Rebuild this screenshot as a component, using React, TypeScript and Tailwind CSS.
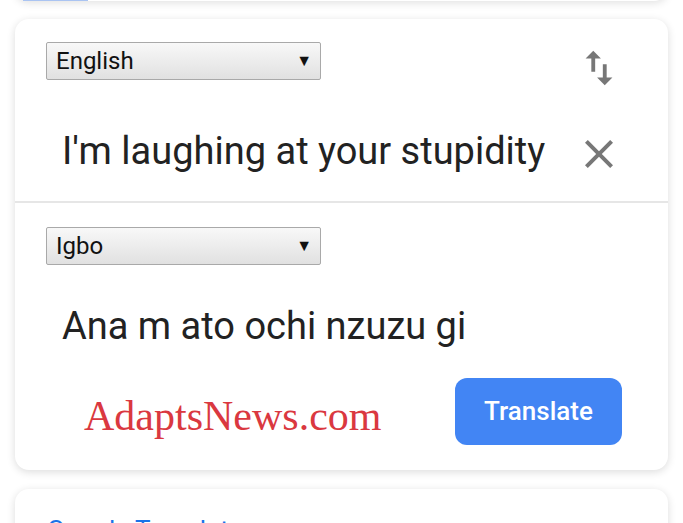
import React from "react";

const roboto = { fontFamily: "Roboto, 'Noto Sans', sans-serif" };

function LangSelect({ label }: { label: string }) {
  return (
    <div className="flex h-[38px] w-[275px] items-center justify-between rounded-[2px] border border-[#a9a9a9] bg-gradient-to-b from-[#f8f8f8] to-[#e1e1e1] pl-[9px] pr-[8px] text-[24px] text-[#111]">
      <span>{label}</span>
      <span className="text-[16px] leading-none">▼</span>
    </div>
  );
}

export default function App() {
  return (
    <div className="min-h-[523px] overflow-hidden bg-white px-[15px]" style={roboto}>
      {/* previous card, mostly scrolled away */}
      <div className="-mt-[40px] flex h-[41px] items-end rounded-[14px] bg-white shadow-[0_2px_8px_rgba(0,0,0,0.12)]">
        <div className="ml-[8px] h-[2px] w-[65px] bg-[#aac4f2]" />
      </div>

      <div className="mt-[18px] rounded-[14px] bg-white shadow-[0_2px_9px_rgba(0,0,0,0.14)]">
        <div className="h-[182px] pl-[31px] pr-[46px] pt-[23px]">
          <div className="flex items-start justify-between">
            <LangSelect label="English" />
            <svg viewBox="0 0 24 24" className="mt-[3px] h-[46px] w-[46px] fill-[#777]">
              <path d="M16 17.01V10h-2v7.01h-3L15 21l4-3.99h-3zM9 3L5 6.99h3V14h2V6.99h3L9 3z" />
            </svg>
          </div>
          <div className="mt-[32px] flex items-start justify-between">
            <span className="pl-[16px] text-[38px] text-[#222]">I'm laughing at your stupidity</span>
            <svg viewBox="0 0 24 24" className="mr-[-1px] mt-[7px] h-[48px] w-[48px] fill-[#777]">
              <path d="M19 6.41L17.59 5 12 10.59 6.41 5 5 6.41 10.59 12 5 17.59 6.41 19 12 13.41 17.59 19 19 17.59 13.41 12z" />
            </svg>
          </div>
        </div>
        <div className="h-[2px] bg-[#e6e6e6]" />
        <div className="h-[267px] pl-[31px] pr-[46px] pt-[24px]">
          <LangSelect label="Igbo" />
          <div className="mt-[33px] pl-[16px] text-[38px] text-[#222]">Ana m ato ochi nzuzu gi</div>
          <div className="mt-[23px] flex items-start justify-between">
            <span
              className="ml-[38px] pt-[7px] text-[42px] text-[#da3840]"
              style={{ fontFamily: "'Liberation Serif', serif" }}
            >
              AdaptsNews.com
            </span>
            <button className="h-[67px] w-[167px] rounded-[12px] bg-[#4285f4] text-[26px] font-medium text-white">
              Translate
            </button>
          </div>
        </div>
      </div>

      <div className="mt-[19px] h-[60px] rounded-[14px] bg-white px-[32px] pt-[22px] shadow-[0_2px_9px_rgba(0,0,0,0.14)]">
        <span className="text-[26px] text-[#1a73e8]">Google Translate</span>
      </div>
    </div>
  );
}
